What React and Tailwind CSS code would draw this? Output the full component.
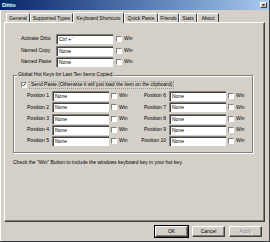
import React from 'react';

const tabs = [
  { label: 'General', w: 'w-[24px]' },
  { label: 'Supported Types', w: 'w-[43px]' },
  { label: 'Keyboard Shortcuts', w: 'w-[51px]', active: true },
  { label: 'Quick Paste', w: 'w-[34px]' },
  { label: 'Friends', w: 'w-[21px]' },
  { label: 'Stats', w: 'w-[18px]' },
  { label: 'About', w: 'w-[22px]' },
];

const Input = ({ value = 'None' }) => (
  <div className="w-[57px] h-[10px] bg-white border-t border-l border-[#808080] border-r-white border-b-[#d4d0c8] shadow-[inset_1px_1px_0_#404040] flex items-center pl-[2px] leading-none">
    {value}
  </div>
);

const Check = ({ checked }) => (
  <div className="w-[6px] h-[6px] bg-white border-t border-l border-[#808080] border-r border-b border-r-white border-b-white flex items-center justify-center shrink-0">
    {checked && (
      <svg width="5" height="5" viewBox="0 0 5 5">
        <path d="M0.5 2.5 L2 4 L4.5 1" stroke="#000" strokeWidth="1" fill="none" />
      </svg>
    )}
  </div>
);

const HotKey = ({ label, value }) => (
  <div className="flex items-center h-[10px]">
    <div className="w-[51px] pl-[16px] whitespace-nowrap">{label}</div>
    <Input value={value} />
    <div className="ml-[3px]"><Check /></div>
    <div className="ml-[2px]">Win</div>
  </div>
);

const PosCell = ({ n, labelW }) => (
  <div className="flex items-center h-[10px]">
    <div className={`${labelW} text-right pr-[3px] whitespace-nowrap`}>Position {n}</div>
    <Input />
    <div className="ml-[2px]"><Check /></div>
    <div className="ml-[2px] w-[12px]">Win</div>
  </div>
);

const Button = ({ children, disabled, def }) => (
  <div
    className={`w-[33px] h-[11px] flex items-center justify-center border border-t-white border-l-white border-r-[#404040] border-b-[#404040] shadow-[inset_-1px_-1px_0_#808080] ${
      def ? 'outline outline-1 outline-black' : ''
    } ${disabled ? 'text-[#808080] [text-shadow:1px_1px_0_#fff]' : 'text-black'}`}
  >
    {children}
  </div>
);

export default function App() {
  return (
    <div
      className="w-[270px] h-[242px] bg-[#d4d0c8] flex flex-col border-r border-b border-[#404040] text-[5px] text-black overflow-hidden"
      style={{ fontFamily: '"Liberation Sans", Arial, sans-serif' }}
    >
      {/* Title bar */}
      <div className="h-[10px] bg-linear-to-r from-[#0a246a] to-[#a6caf0] flex items-center justify-between pl-[2px] pr-[2px]">
        <span className="text-white font-bold text-[6px] leading-none">Ditto</span>
        <div className="w-[7px] h-[6px] bg-[#d4d0c8] border border-t-white border-l-white border-r-[#404040] border-b-[#404040] flex items-center justify-center text-[5px] font-bold leading-none">
          ×
        </div>
      </div>

      <div className="pl-[3px] pr-[4px] pt-[1px] border-l border-white flex-1 flex flex-col">
        {/* Tabs */}
        <div className="flex items-end h-[11px] pl-[2px]">
          {tabs.map((t) => (
            <div
              key={t.label}
              className={`${t.w} ${
                t.active ? 'h-[11px] bg-[#d4d0c8] -mb-px z-10 relative' : 'h-[9px]'
              } border-l border-t border-white border-r border-r-[#404040] rounded-t-[1px] flex items-center justify-center whitespace-nowrap leading-none`}
            >
              {t.label}
            </div>
          ))}
        </div>

        {/* Panel */}
        <div className="h-[200px] border border-t-white border-l-white border-r-[#404040] border-b-[#404040] shadow-[inset_-1px_-1px_0_#808080] flex flex-col">
          <div className="mt-[11px] flex flex-col gap-[1.5px]">
            <HotKey label="Activate Ditto" value="Ctrl + `" />
            <HotKey label="Named Copy" />
            <HotKey label="Named Paste" />
          </div>

          {/* Group box */}
          <div className="relative ml-[8px] mt-[8px] w-[240px] h-[78px] border border-[#808080] shadow-[inset_1px_1px_0_#fff,1px_1px_0_#fff] pt-[4px]">
            <div className="absolute -top-[4px] left-[3px] bg-[#d4d0c8] px-[1px] leading-none">
              Global Hot Keys for Last Ten Items Copied
            </div>
            <div className="flex items-center ml-[7px] h-[9px]">
              <Check checked />
              <div className="ml-[2px] h-[8px] px-[1px] flex items-center border border-dotted border-[#9a968e] leading-none whitespace-nowrap">
                <span>Send Paste (Otherwise it will just load the item on the clipboard)</span>
              </div>
            </div>
            <div className="mt-[2px] flex flex-col gap-[1.25px]">
              {[1, 2, 3, 4, 5].map((n) => (
                <div key={n} className="flex">
                  <PosCell n={n} labelW="w-[38px]" />
                  <div className="w-[9px]" />
                  <PosCell n={n + 5} labelW="w-[29px]" />
                </div>
              ))}
            </div>
          </div>

          <div className="ml-[8px] mt-[6px] whitespace-nowrap">
            Check the "Win" Button to include the windows keyboard key in your hot key.
          </div>
        </div>

        {/* Buttons */}
        <div className="flex justify-end gap-[4px] mt-[4px] pr-[3px]">
          <Button def>OK</Button>
          <Button>Cancel</Button>
          <Button disabled>Apply</Button>
        </div>
      </div>
    </div>
  );
}
